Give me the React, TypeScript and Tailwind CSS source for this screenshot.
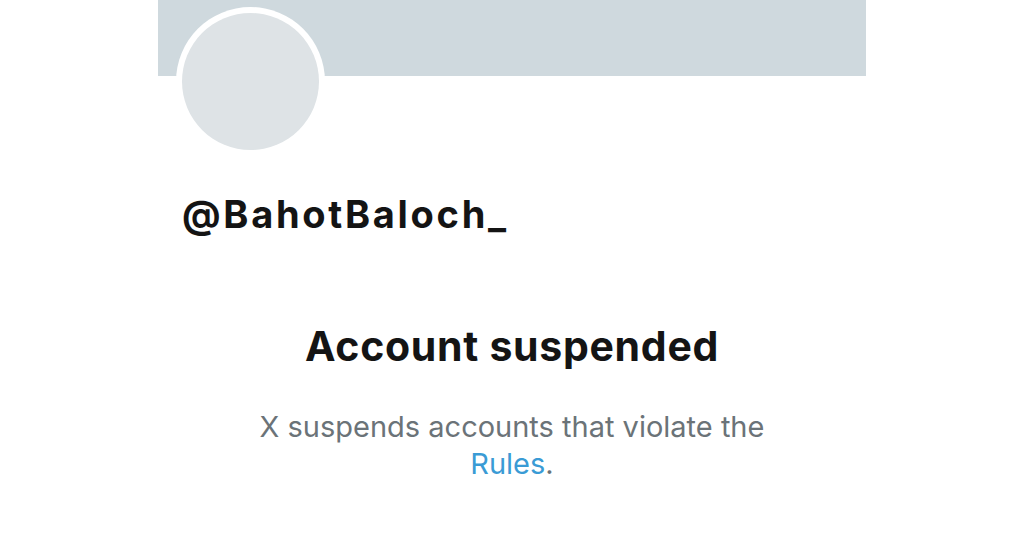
import React from "react";

export default function App() {
  return (
    <div className="w-[1024px] h-[536px] bg-white overflow-hidden flex justify-center" style={{ fontFamily: "Inter, 'Noto Sans', sans-serif" }}>
      <div className="w-[708px] flex flex-col">
        <div className="h-[76px] bg-[#cfd9de]" />
        <div className="pl-[18px] -mt-[69px]">
          <div className="w-[149px] h-[149px] rounded-full bg-white p-[6px]">
            <div className="w-full h-full rounded-full bg-[#dee3e6]" />
          </div>
        </div>
        <div className="pl-[24px] mt-[36px] text-[38px] leading-[44px] font-bold text-[#141414] tracking-[2.7px]">
          @BahotBaloch_
        </div>
        <div className="mt-[86px] text-center text-[41px] leading-[48px] font-bold text-[#141414] tracking-[0.7px]">
          Account suspended
        </div>
        <div className="mt-[38px] text-center text-[29px] leading-[37px] text-[#6b7378]">
          X suspends accounts that violate the
          <br />
          <span className="text-[#3a9bd5]">Rules</span>.
        </div>
      </div>
    </div>
  );
}
